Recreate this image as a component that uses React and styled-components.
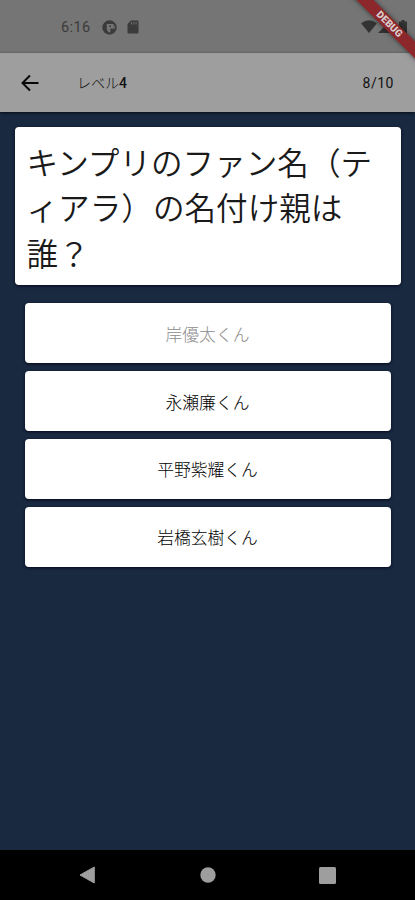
import React from "react";
import styled, { createGlobalStyle } from "styled-components";

const GlobalStyle = createGlobalStyle`
  * {
    box-sizing: border-box;
  }
  body {
    margin: 0;
    background-color: #182940;
  }
`;
const Container = styled.div`
  position: relative;
  width: 100%;
  height: 900px;
  display: flex;
  flex-direction: column;
  overflow: hidden;
  background-color: #182940;
  font-family: Roboto, "Noto Sans CJK JP", sans-serif;
`;
const StatusBar = styled.div`
  height: 53px;
  flex: none;
  display: flex;
  align-items: center;
  padding: 1px 8px 0 61px;
  background-color: #757575;
  color: #3b3b3b;
`;
const Time = styled.span`
  width: 41px;
  font-size: 14.5px;
  letter-spacing: 0.4px;
`;
const StatusIcon = styled.svg`
  flex: none;
  display: block;
  margin-left: ${(props) => props.$gap || 0}px;
`;
const StatusRight = styled.div`
  display: flex;
  margin-left: auto;
`;
const AppBar = styled.header`
  position: relative;
  height: 59px;
  flex: none;
  display: flex;
  align-items: center;
  padding: 0 21px 0 20px;
  background-color: #9e9e9e;
  color: #111;
  box-shadow: 0 1px 3px rgba(0, 0, 0, 0.7);
`;
const BackButton = styled.button`
  display: flex;
  width: 57px;
  padding: 0;
  border: 0;
  background: none;
`;
const Title = styled.h1`
  flex: 1;
  margin: 0;
  font-size: 14px;
  line-height: 20px;
  font-weight: 300;
`;
const Level = styled.span`
  font-weight: 500;
`;
const Progress = styled.span`
  font-size: 14px;
  letter-spacing: 0.5px;
`;
const Main = styled.main`
  flex: 1;
  padding: 15px 14px 0 15px;
`;
const Card = styled.div`
  background-color: #fff;
  border-radius: 4px;
  box-shadow: 0 1px 3px rgba(0, 0, 20, 0.8);
`;
const Question = styled(Card)`
  height: 158px;
  padding: 14.5px 12px 0 11.5px;
  font-size: 31.6px;
  line-height: 45.6px;
  font-weight: 350;
  color: #1a1a1a;
`;
const Options = styled.div`
  display: flex;
  flex-direction: column;
  gap: 7.8px;
  padding: 18.3px 10px 0;
`;
const Option = styled(Card).attrs({ as: "button" })`
  height: 60px;
  border: 0;
  padding: 1px 1px 0 0;
  font-family: inherit;
  font-size: 16.8px;
  font-weight: 300;
  color: ${(props) => (props.$faded ? "#8c8c8c" : "#000")};
`;
const NavBar = styled.nav`
  height: 50px;
  flex: none;
  display: flex;
  align-items: center;
  justify-content: space-between;
  padding: 0 79px;
  background-color: #000;
`;
const Ribbon = styled.div`
  position: absolute;
  top: 19px;
  left: 340px;
  width: 100px;
  height: 12px;
  padding-right: 2px;
  background-color: #8c272b;
  box-shadow: 0 0 5px rgba(0, 0, 0, 0.55);
  color: #d9cdcd;
  font-size: 10px;
  line-height: 12.5px;
  font-weight: 900;
  text-align: center;
  transform: rotate(45deg);
`;

const options = [
  { name: "岸優太くん", faded: true },
  { name: "永瀬廉くん" },
  { name: "平野紫耀くん" },
  { name: "岩橋玄樹くん" },
];

const App = () => {
  return (
    <>
      <GlobalStyle />
      <Container lang="ja">
        <StatusBar>
          <Time>6:16</Time>
          <StatusIcon width="15" height="15" viewBox="0 0 15 15">
            <circle cx="7.5" cy="7.5" r="7.2" fill="#3b3b3b" />
            <path d="M4.8 4h6.7v4.6H8.3v3.6H6.5L4.8 9.5Z" fill="#757575" />
            <path d="M7.3 5.6H9V7H7.3Z" fill="#3b3b3b" />
            <path d="M11.5 4.5 13.3 7.5 11.5 9.5Z" fill="#757575" />
          </StatusIcon>
          <StatusIcon width="12" height="14" viewBox="0 0 12 14" $gap={10}>
            <path
              d="M4 .5h6.5Q11.5 .5 11.5 1.5V12.5Q11.5 13.5 10.5 13.5H1.5Q.5 13.5 .5 12.5V4Z"
              fill="#3b3b3b"
            />
            <path d="M4.5 2v2.5M6.8 2v2.5M9.1 2v2.5" stroke="#757575" strokeWidth=".9" />
          </StatusIcon>
          <StatusRight>
            <StatusIcon width="16" height="13" viewBox="0 0 16 13">
              <path d="M0 3.2Q8-2.8 16 3.2L8 13Z" fill="#333" />
            </StatusIcon>
            <StatusIcon width="13" height="13" viewBox="0 0 13 13" $gap={1}>
              <path d="M13 0v13H0Z" fill="#333" />
            </StatusIcon>
            <StatusIcon width="8" height="14" viewBox="0 0 8 14" $gap={8}>
              <path d="M2.5 0h3v1.5H8V14H0V1.5h2.5Z" fill="#333" />
            </StatusIcon>
          </StatusRight>
        </StatusBar>
        <AppBar>
          <BackButton aria-label="back">
            <svg width="20" height="18" viewBox="0 0 20 18">
              <path d="M18.5 9H3M10 1.5 2.5 9l7.5 7.5" fill="none" stroke="#080808" strokeWidth="2" />
            </svg>
          </BackButton>
          <Title>
            レベル<Level>4</Level>
          </Title>
          <Progress>8/10</Progress>
        </AppBar>
        <Main>
          <Question>キンプリのファン名（ティアラ）の名付け親は誰？</Question>
          <Options>
            {options.map((option) => (
              <Option key={option.name} $faded={option.faded}>
                {option.name}
              </Option>
            ))}
          </Options>
        </Main>
        <NavBar>
          <svg width="17" height="18" viewBox="0 0 17 18">
            <path d="M15.3 1v16L1 9Z" fill="#9e9e9e" stroke="#9e9e9e" strokeLinejoin="round" />
          </svg>
          <svg width="16" height="16" viewBox="0 0 16 16">
            <circle cx="8" cy="8" r="7.7" fill="#9e9e9e" />
          </svg>
          <svg width="17" height="17" viewBox="0 0 17 17">
            <rect width="17" height="17" rx="1.5" fill="#9e9e9e" />
          </svg>
        </NavBar>
        <Ribbon>DEBUG</Ribbon>
      </Container>
    </>
  );
};

export default App;
